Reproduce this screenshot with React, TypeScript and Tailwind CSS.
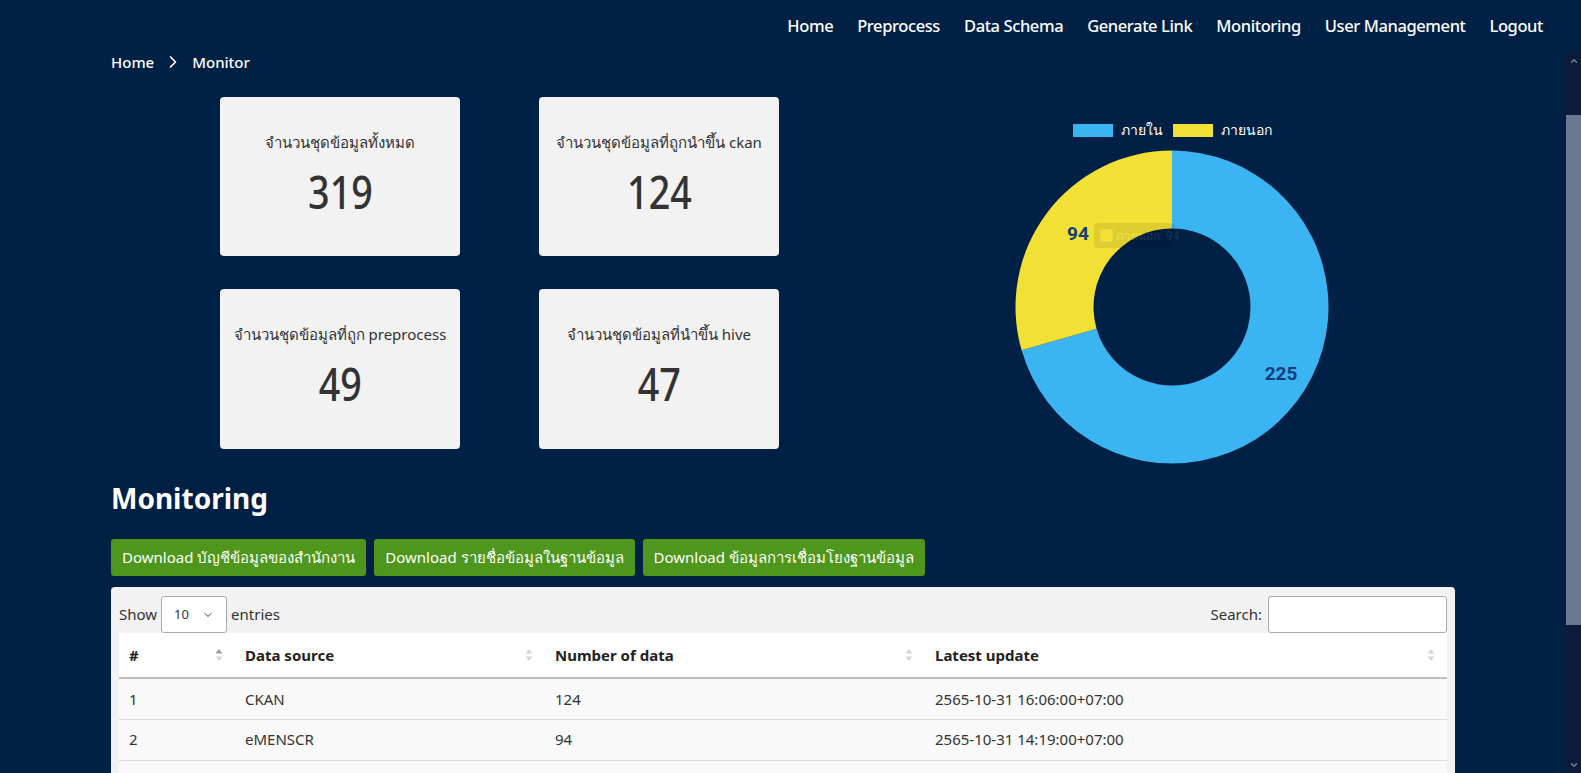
import { ChevronDown, ChevronRight, ChevronUp } from "lucide-react"

const navItems = ["Home", "Preprocess", "Data Schema", "Generate Link", "Monitoring", "User Management", "Logout"]

const cards = [
  { title: "จำนวนชุดข้อมูลทั้งหมด", value: 319 },
  { title: "จำนวนชุดข้อมูลที่ถูกนำขึ้น ckan", value: 124 },
  { title: "จำนวนชุดข้อมูลที่ถูก preprocess", value: 49 },
  { title: "จำนวนชุดข้อมูลที่นำขึ้น hive", value: 47 },
]

const rows = [
  { id: 1, source: "CKAN", count: 124, updated: "2565-10-31 16:06:00+07:00" },
  { id: 2, source: "eMENSCR", count: 94, updated: "2565-10-31 14:19:00+07:00" },
  { id: 3, source: "HIVE", count: 47, updated: "2565-10-30 09:12:00+07:00" },
  { id: 4, source: "Preprocess", count: 49, updated: "2565-10-29 11:45:00+07:00" },
]

// donut slice between two angles (degrees, clockwise from 12 o'clock)
function slice(cx: number, cy: number, ro: number, ri: number, a0: number, a1: number) {
  const p = (r: number, a: number) => {
    const rad = (a * Math.PI) / 180
    return `${(cx + r * Math.sin(rad)).toFixed(2)} ${(cy - r * Math.cos(rad)).toFixed(2)}`
  }
  const large = a1 - a0 > 180 ? 1 : 0
  return `M ${p(ro, a0)} A ${ro} ${ro} 0 ${large} 1 ${p(ro, a1)} L ${p(ri, a1)} A ${ri} ${ri} 0 ${large} 0 ${p(ri, a0)} Z`
}

const SortIcon = ({ active = false }: { active?: boolean }) => (
  <svg width="8" height="14" viewBox="0 0 8 14">
    <path d="M4 1 L7.5 5.5 H0.5 Z" fill={active ? "#9a9a9a" : "#d6d6d6"} />
    <path d="M4 13 L7.5 8.5 H0.5 Z" fill="#d6d6d6" />
  </svg>
)

function Donut() {
  const inner = 225
  const outer = 94
  const split = (inner / (inner + outer)) * 360
  return (
    <svg width="314" height="314" viewBox="0 0 314 314">
      <path d={slice(157, 157, 156.5, 78.5, 0, split)} fill="#3bb4f2" />
      <path d={slice(157, 157, 156.5, 78.5, split, 360)} fill="#f2e034" />
      {/* fading tooltip left over from hover */}
      <g opacity="0.08">
        <rect x="79" y="73" width="81" height="25" rx="4" fill="#000" />
        <rect x="86" y="80" width="11" height="11" fill="#f2e034" stroke="#fff" />
        <text x="101" y="90" fontSize="12" fill="#fff" fontFamily="Roboto, sans-serif">
          ภายนอก: 94
        </text>
      </g>
      <text x="266" y="230" textAnchor="middle" fontSize="19" fontWeight="700" fill="#143c78" fontFamily="Roboto, sans-serif">
        225
      </text>
      <text x="63" y="90" textAnchor="middle" fontSize="19" fontWeight="700" fill="#143c78" fontFamily="Roboto, sans-serif">
        94
      </text>
    </svg>
  )
}

// page scrollbar as drawn by the browser
const ScrollBar = () => (
  <div className="w-[15px] shrink-0 bg-[#0c1b39] flex flex-col items-center">
    <div className="h-[17px] flex items-center justify-center text-[#7d879b]">
      <ChevronUp size={10} strokeWidth={3} />
    </div>
    <div className="mt-[46px] w-full h-[510px] bg-[#6b7891]" />
    <div className="flex-1" />
    <div className="h-[17px] flex items-center justify-center text-[#7d879b]">
      <ChevronDown size={10} strokeWidth={3} />
    </div>
  </div>
)

export default function App() {
  return (
    <div className="h-[773px] w-full flex flex-col bg-[#002046] overflow-hidden font-['Noto_Sans',sans-serif] text-white">
      {/* Navbar */}
      <nav className="h-[52px] shrink-0 flex items-center justify-end gap-6 pr-[38px]">
        {navItems.map((item) => (
          <a key={item} className="text-[16.5px] font-medium leading-none tracking-[-0.4px]">
            {item}
          </a>
        ))}
      </nav>

      <div className="flex-1 flex min-h-0">
        {/* Scrolled content */}
        <div
          className="flex-1 overflow-hidden"
          ref={(el) => {
            if (el) el.scrollTop = 65
          }}
        >
          <div className="min-h-[971px] pl-[111px] w-[1455px]">
            <div className="h-[65px]" />

            {/* Breadcrumb */}
            <div className="h-[20px] flex items-center gap-[6px] text-[15px] font-medium">
              <span>Home</span>
              <ChevronRight size={20} strokeWidth={2} className="mx-[3px]" />
              <span>Monitor</span>
            </div>

            {/* Cards + chart */}
            <div className="mt-[25px] flex">
              <div className="ml-[109px] grid grid-cols-[240px_240px] grid-rows-[159px_160px] gap-x-[79px] gap-y-[33px]">
                {cards.map((c) => (
                  <div key={c.title} className="bg-[#f2f2f2] rounded-[4px] flex flex-col items-center pt-[34px] text-[#333]">
                    <div className="text-[15px] leading-[22px]">{c.title}</div>
                    <div className="mt-[12px] text-[46px] leading-[52px] font-medium scale-x-[0.82]">{c.value}</div>
                  </div>
                ))}
              </div>

              <div className="ml-[236px] flex flex-col items-center pt-[25px] w-[314px]">
                <div className="h-[16px] flex items-center gap-[8px] text-[14px] font-['Liberation_Sans',sans-serif]">
                  <span className="w-[40px] h-[13px] bg-[#3bb4f2]" />
                  <span className="mr-[2px]">ภายใน</span>
                  <span className="w-[40px] h-[13px] bg-[#f2e034]" />
                  <span>ภายนอก</span>
                </div>
                <div className="mt-[12px]">
                  <Donut />
                </div>
              </div>
            </div>

            {/* Monitoring */}
            <h2 className="mt-[16px] text-[28px] leading-[36px] font-bold">Monitoring</h2>

            <div className="mt-[23px] flex gap-[8px]">
              {["Download บัญชีข้อมูลของสำนักงาน", "Download รายชื่อข้อมูลในฐานข้อมูล", "Download ข้อมูลการเชื่อมโยงฐานข้อมูล"].map((b) => (
                <button key={b} className="h-[37px] px-[11px] bg-[#4e961c] rounded-[3px] text-[15px] text-white">
                  {b}
                </button>
              ))}
            </div>

            {/* Table panel */}
            <div className="mt-[11px] bg-[#f2f2f2] rounded-t-[4px] px-[8px] pt-[9px] pb-[12px] text-[#333]">
              <div className="flex items-center justify-between">
                <div className="flex items-center gap-[4px] text-[15px]">
                  <span>Show</span>
                  <div className="w-[66px] h-[37px] bg-white border border-[#aaa] rounded-[3px] flex items-center justify-between px-[12px]">
                    <span className="text-[13px]">10</span>
                    <ChevronDown size={12} strokeWidth={2} />
                  </div>
                  <span>entries</span>
                </div>
                <div className="flex items-center gap-[6px] text-[15px]">
                  <span>Search:</span>
                  <div className="w-[179px] h-[37px] bg-white border border-[#aaa] rounded-[3px]" />
                </div>
              </div>

              <table className="w-full border-collapse text-[15px] table-fixed">
                <colgroup>
                  <col className="w-[116px]" />
                  <col className="w-[310px]" />
                  <col className="w-[380px]" />
                  <col />
                </colgroup>
                <thead>
                  <tr className="bg-white h-[45px] border-b-2 border-[#bdbdbd]">
                    {["#", "Data source", "Number of data", "Latest update"].map((h, i) => (
                      <th key={h} className="text-left font-bold text-[#222] pl-[10px] pr-[12px]">
                        <div className="flex items-center justify-between">
                          <span>{h}</span>
                          <SortIcon active={i === 0} />
                        </div>
                      </th>
                    ))}
                  </tr>
                </thead>
                <tbody>
                  {rows.map((r) => (
                    <tr key={r.id} className="h-[41px] bg-[#f9f9f9] border-b border-[#ddd]">
                      <td className="pl-[10px]">{r.id}</td>
                      <td className="pl-[10px]">{r.source}</td>
                      <td className="pl-[10px]">{r.count}</td>
                      <td className="pl-[10px]">{r.updated}</td>
                    </tr>
                  ))}
                </tbody>
              </table>

              <div className="mt-[12px] flex items-center justify-between text-[15px]">
                <span>Showing 1 to 4 of 4 entries</span>
                <div className="flex items-center gap-[4px]">
                  <span className="px-[12px] py-[6px] text-[#888]">Previous</span>
                  <span className="px-[12px] py-[6px] border border-[#aaa] rounded-[3px] bg-white">1</span>
                  <span className="px-[12px] py-[6px] text-[#888]">Next</span>
                </div>
              </div>
            </div>
          </div>
        </div>

        <ScrollBar />
      </div>
    </div>
  )
}
